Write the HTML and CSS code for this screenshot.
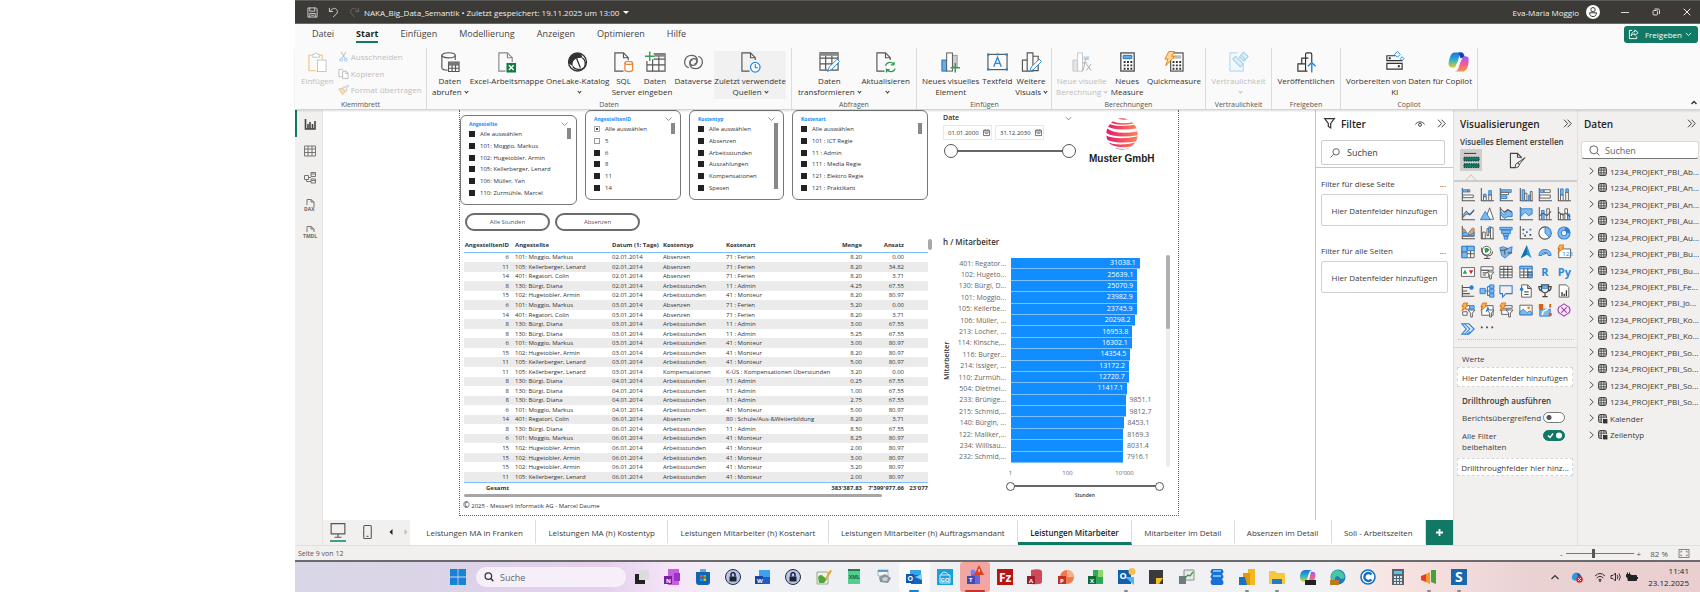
FILE: index.html
```html
<!DOCTYPE html>
<html lang="de">
<head>
<meta charset="utf-8">
<title>NAKA_Big_Data_Semantik</title>
<link rel="stylesheet" href="styles.css">
</head>
<body>
<div class="app">
  <header class="titlebar">
    <button class="tb-icon" aria-label="Speichern"><svg viewBox="0 0 12 12"><path d="M1 1h9l1 1v9H1zM3 1v3.500h5.500V1M3 11V7h6v4M4.500 9h3" fill="none" stroke="#d8d8d8"/></svg></button>
    <button class="tb-icon" aria-label="Rückgängig"><svg viewBox="0 0 12 12"><path d="M1.500 1v4h4M2 5l2.500-2.700C8-.5 12.500 4.500 9 7.800L5.500 11" fill="none" stroke="#d8d8d8"/></svg></button>
    <button class="tb-icon" aria-label="Wiederholen"><svg viewBox="0 0 12 12"><path d="M10.500 1v4h-4M10 5L7.500 2.300C4-.5-.5 4.500 3 7.800L6.500 11" fill="none" stroke="#6c6b69"/></svg></button>
    <span class="doc-title">NAKA_Big_Data_Semantik • Zuletzt gespeichert: 19.11.2025 um 13:00</span>
    <svg class="caret" viewBox="0 0 6 3"><path d="M0 0h6L3 3z" fill="#fff"/></svg>
    <span class="user">Eva-Maria Moggio</span>
    <svg class="avatar" viewBox="0 0 14 14"><circle cx="7" cy="7" r="7" fill="#fff"/><circle cx="7" cy="4.700" r="2.200" fill="none" stroke="#3b3a37"/><path d="M3.500 7.800h7c0 5-7 5-7 0z" fill="none" stroke="#3b3a37"/></svg>
    <button class="win" aria-label="Minimieren"><svg viewBox="0 0 8 8"><path d="M0 4.500h8" stroke="#ddd"/></svg></button>
    <button class="win" aria-label="Wiederherstellen"><svg viewBox="0 0 8 8"><rect x="1" y="2.500" width="4.500" height="4.500" rx="1" fill="none" stroke="#ddd"/><path d="M2.500 1h3.500q1.500 0 1.500 1.500V6" fill="none" stroke="#ddd"/></svg></button>
    <button class="win" aria-label="Schliessen"><svg viewBox="0 0 8 8"><path d="M.7.700l6.600 6.600M7.300.700L.7 7.300" stroke="#eee"/></svg></button>
  </header>

  <nav class="menubar">
    <a href="#">Datei</a><a href="#" class="on">Start</a><a href="#">Einfügen</a><a href="#">Modellierung</a><a href="#">Anzeigen</a><a href="#">Optimieren</a><a href="#">Hilfe</a>
    <button class="share"><svg viewBox="0 0 12 12"><path d="M4.500 1.500H1.500v9h8V8" fill="none" stroke="#fff"/><path d="M7.500 1l3.500 3-3.500 3V5.300C5.500 5.300 4.300 6 3.500 7.500 3.600 5 5 2.900 7.500 2.700z" fill="none" stroke="#fff" stroke-linejoin="round"/></svg><span>Freigeben</span><svg class="sm" viewBox="0 0 8 5"><path d="M1 .700l3 3 3-3" fill="none" stroke="#fff"/></svg></button>
  </nav>

  <div class="ribbon">
    <section class="group g-clip off">
      <div class="items">
        <button class="cmd"><svg viewBox="0 0 22 22"><path d="M5 4H2v16h8M13 4h3v4" fill="none" stroke="#f3cfa0" stroke-width="1.500"/><path d="M6 6V3h2c0-2 3-2 3 0h2v3z" fill="#fff" stroke="#c4c4c4"/><rect x="11" y="9" width="9" height="12" fill="#fff" stroke="#c4c4c4"/></svg><span>Einfügen</span></button>
        <div class="stack">
          <button><svg viewBox="0 0 12 12"><path d="M3.500 1l4 7M8.500 1l-4 7" stroke="#b5b5b5" fill="none"/><circle cx="3.500" cy="9.500" r="1.500" fill="none" stroke="#8fc1e8"/><circle cx="8.500" cy="9.500" r="1.500" fill="none" stroke="#8fc1e8"/></svg>Ausschneiden</button>
          <button><svg viewBox="0 0 12 12"><path d="M5 9.500H1v-8h4l1 1M5 3.500h4l2 2v6H5zM8.500 3.500V6H11" fill="none" stroke="#bcbcbc"/></svg>Kopieren</button>
          <button><svg viewBox="0 0 12 12"><path d="M1 5.500l4-1 3.500 3.500L5 11.500z" fill="#f7dcb8" stroke="#eebf88"/><path d="M5 4.500L6.500 3 8 4l2.500-3 1 1L9 5l.7 1.500-1.200 1.500z" fill="#fff" stroke="#bcbcbc"/></svg>Format übertragen</button>
        </div>
      </div>
      <h2>Klemmbrett</h2>
    </section>
    <section class="group g-data">
      <div class="items">
        <button class="cmd"><svg viewBox="0 0 22 22"><path d="M3 4v13c0 1.500 3 2.500 6 2.500M17 4v5" class="k"/><ellipse cx="10" cy="4" rx="7" ry="2.700" class="k"/><path d="M10 11h11v10H10zM10 14h11M10 17.500h11M13.700 14v7M17.300 14v7" class="k"/><path d="M10 11h11v3H10z" fill="#777"/></svg><span>Daten<br>abrufen<i class="v"></i></span></button>
        <button class="cmd"><svg viewBox="0 0 22 22"><path d="M10 20.500H3v-19h9l5 5V11M12 1.500v5h5" fill="none" stroke="#888" stroke-width="1.200"/><rect x="11" y="12" width="10" height="10" fill="#107c41"/><path d="M13.500 14.500l5 5M18.500 14.500l-5 5" stroke="#fff" stroke-width="1.500"/></svg><span>Excel-Arbeitsmappe</span></button>
        <button class="cmd"><svg viewBox="0 0 22 22"><circle cx="11" cy="11" r="9.400" fill="#fff" stroke="#333" stroke-width="1.400"/><path d="M11 1.600C4 1.600 1 7 2 12.500l4 3C5 9 9 6 16 6.500c0-3-2-4.900-5-4.900z" fill="#333"/><path d="M6 15.500c2 3.500 8 4.500 12 1.500M16 6.500c3 2 4 6 2 10.500M10 7l4 10" fill="none" stroke="#333" stroke-width="1.400"/></svg><span>OneLake-Katalog<br><i class="v"></i></span></button>
        <button class="cmd"><svg viewBox="0 0 22 22"><path d="M11 20.500H2v-19h9l5 5V9M11 1.500v5h5" class="k"/><path d="M12.500 12v7.500c0 2 8 2 8 0V12" fill="#fff" stroke="#e8833a" stroke-width="1.300"/><ellipse cx="16.500" cy="12" rx="4" ry="1.600" fill="#fff" stroke="#e8833a" stroke-width="1.300"/></svg><span>SQL<br>Server</span></button>
        <button class="cmd"><svg viewBox="0 0 22 22"><path d="M9 2.500h12v18H2V10M9 8h12M2 14h19M8 8v12.500M14.500 4v16.500" class="k"/><path d="M10 2.500h11v3H10z" fill="#888"/><path d="M5 0v10M0 5h10" stroke="#2f9e50" stroke-width="1.400"/></svg><span>Daten<br>eingeben</span></button>
        <button class="cmd"><svg viewBox="0 0 22 22"><path d="M6 17C-1 15 1 4 9 4c7 0 8 9 2 10.500-4 .5-5-5-1-5.800M16 5c7 2 5 13-3 13-7 0-8-9-2-10.500 4-.5 5 5 1 5.800" fill="none" stroke="#666" stroke-width="1.400"/></svg><span>Dataverse</span></button>
        <button class="cmd hot"><svg viewBox="0 0 22 22"><path d="M10 20.500H2v-19h9l5 5V9M11 1.500v5h5" class="k"/><circle cx="16" cy="16.500" r="5" fill="#fff" stroke="#2b88d8" stroke-width="1.300"/><path d="M16 13v4h3" fill="none" stroke="#2b88d8" stroke-width="1.200"/></svg><span>Zuletzt verwendete<br>Quellen<i class="v"></i></span></button>
      </div>
      <h2>Daten</h2>
    </section>
    <section class="group g-query">
      <div class="items">
        <button class="cmd"><svg viewBox="0 0 22 22"><path d="M1 1.500h19v18H1zM1 7h19M1 13h19M7 4v15.500M13.500 4v15.500" class="k"/><path d="M1 1.500h19v3H1z" fill="#888"/><path d="M9 21l2-5 8-8 2.500 2.500-8 8z" fill="#fff" stroke="#2b88d8"/></svg><span>Daten<br>transformieren<i class="v"></i></span></button>
        <button class="cmd"><svg viewBox="0 0 22 22"><path d="M10 20.500H2v-19h9l5 5V9M11 1.500v5h5" class="k"/><path d="M11 15c1-4 7-5 9-1V11M21 18c-1 4-7 4-9 1v3M20 14h-3.500M12 19h3.500" fill="none" stroke="#2f9e50" stroke-width="1.300"/></svg><span>Aktualisieren<br><i class="v"></i></span></button>
      </div>
      <h2>Abfragen</h2>
    </section>
    <section class="group g-insert">
      <div class="items">
        <button class="cmd"><svg viewBox="0 0 22 22"><rect x="2" y="9" width="5" height="11.500" fill="#63aee8" stroke="#1a6fb8"/><rect x="13" y="4" width="5" height="12" fill="#ccc" stroke="#999"/><rect x="7" y="1.500" width="6" height="19" fill="#fff" stroke="#555"/><path d="M16 12v10M11 17h10" stroke="#2f9e50" stroke-width="1.500"/></svg><span>Neues visuelles<br>Element</span></button>
        <button class="cmd"><svg viewBox="0 0 22 22"><rect x="1" y="3" width="20" height="16" class="k"/><path d="M0 2h2.500v2.500H0zM19.500 2H22v2.500h-2.500zM0 17.500h2.500V20H0zM19.500 17.500H22V20h-2.500zM10 2h2.500v2H10z" fill="#2b88d8"/><path d="M7 16l4-10 4 10M8.500 12.500h5" fill="none" stroke="#2b88d8" stroke-width="1.400"/></svg><span>Textfeld</span></button>
        <button class="cmd"><svg viewBox="0 0 22 22"><path d="M1.500 9h5v11.500h-5zM6.500 1.500h6v19h-6zM12.500 5H18v15h-5.500z" class="k"/><path d="M9 21l2-5 8-8 2.500 2.500-8 8z" fill="#fff" stroke="#2b88d8"/></svg><span>Weitere<br>Visuals<i class="v"></i></span></button>
      </div>
      <h2>Einfügen</h2>
    </section>
    <section class="group g-calc">
      <div class="items">
        <button class="cmd off"><svg viewBox="0 0 22 22"><rect x="2" y="9" width="5" height="11.500" fill="#e4e4e4" stroke="#c8c8c8"/><rect x="7" y="1.500" width="5" height="19" fill="#fff" stroke="#c8c8c8"/><path d="M13 5h6v4h-6z" fill="#bcdcf5"/><path d="M18 7c-3-1-3 3-4 7s-1 7-3 6M12 12h5M16 13l5 7M21 13l-5 7" fill="none" stroke="#aaa"/></svg><span>Neue visuelle<br>Berechnung<i class="v"></i></span></button>
        <button class="cmd"><svg viewBox="0 0 22 22"><rect x="4" y="1.500" width="14" height="19" fill="#fff" stroke="#444" stroke-width="1.300"/><path d="M6.500 4h9v3.500h-9z" fill="#63aee8" stroke="#1a6fb8"/><path d="M7 11h9M7 14.500h9M7 18h9" stroke="#333" stroke-width="2" stroke-dasharray="2 1.500"/></svg><span>Neues<br>Measure</span></button>
        <button class="cmd"><svg viewBox="0 0 22 22"><rect x="8" y="1.500" width="13" height="19" fill="#fff" stroke="#555" stroke-width="1.300"/><path d="M10 4h9v3.500h-9z" fill="#bbb"/><path d="M10 11h9M10 14.500h9M10 18h9" stroke="#333" stroke-width="2" stroke-dasharray="2 1.500"/><path d="M6 0h6L9 5h3L3 15l2-7H2z" fill="#fdd49a" stroke="#e8820c"/></svg><span>Quickmeasure</span></button>
      </div>
      <h2>Berechnungen</h2>
    </section>
    <section class="group g-sens">
      <div class="items">
        <button class="cmd off"><svg viewBox="0 0 22 22"><path d="M10 1.500H2v19h14V12" fill="#f2f9fd" stroke="#a9d3ec"/><path d="M5 8l8 8 3-3-8-8zM12 6l4-5 5 4-4 5zM14 4l4 4" fill="#dff0fa" stroke="#a9d3ec" stroke-width="1.300"/></svg><span>Vertraulichkeit<br><i class="v"></i></span></button>
      </div>
      <h2>Vertraulichkeit</h2>
    </section>
    <section class="group g-pub">
      <div class="items">
        <button class="cmd"><svg viewBox="0 0 22 22"><path d="M12 20.500H2V13h8M6 13V7h7M10 7V3q0-1.500 1.500-1.500H15q1.500 0 1.500 1.500v8M10 7v13.500" fill="none" stroke="#333" stroke-width="1.200"/><path d="M16.500 22V12M12.500 15.500l4-4 4 4" fill="none" stroke="#2b88d8" stroke-width="1.500"/></svg><span>Veröffentlichen</span></button>
      </div>
      <h2>Freigeben</h2>
    </section>
    <section class="group g-cop">
      <div class="items">
        <button class="cmd"><svg viewBox="0 0 22 22"><path d="M12 4.500H3v5h16V8M3 12.500h16v6H3z" fill="none" stroke="#333" stroke-width="1.200"/><path d="M5 6h2v2H5zM14.500 14.500h2v2h-2z" fill="#222"/><path d="M14 0l3 3-3 3-3-3zM19 5.500l2 2-2 2-2-2z" fill="#fff" stroke="#2b88d8"/></svg><span>Vorbereiten von Daten für<br>KI</span></button>
        <button class="cmd"><svg viewBox="0 0 22 22"><defs><linearGradient id="ca" x1="0" y1="0" x2="0" y2="1"><stop offset="0" stop-color="#1f6fe0"/><stop offset=".5" stop-color="#28b4c8"/><stop offset="1" stop-color="#f4c430"/></linearGradient><linearGradient id="cb" x1="0" y1="0" x2="0" y2="1"><stop offset="0" stop-color="#a05cf0"/><stop offset=".5" stop-color="#ee5c9c"/><stop offset="1" stop-color="#f8943c"/></linearGradient></defs><path d="M7 1h9c-3 0-4 3-5 7l-2 6c-1 2-2 3-4 3-4 0-5-3-4-7S3 1 7 1z" fill="url(#ca)"/><path d="M11 1h3c3 0 3 4 4 6h-5z" fill="#1b3fb4"/><path d="M15 21H7c3 0 4-3 5-7l2-6c1-2 2-3 4-3 4 0 4 3 3.500 7S19 21 15 21z" fill="url(#cb)"/><path d="M12 7h3l-4 8H8z" fill="#fafafa"/></svg><span>Copilot</span></button>
      </div>
      <h2>Copilot</h2>
    </section>
    <button class="collapse" aria-label="Menüband reduzieren"><svg viewBox="0 0 8 5"><path d="M1.500 4L4 1.500 6.500 4" fill="none" stroke="#333" stroke-width="1.400"/></svg></button>
  </div>

  <div class="work">
    <nav class="rail">
      <button class="on" aria-label="Berichtansicht"><svg viewBox="0 0 12 12"><path d="M1.500 1v10h9.500V3M4 11V6M6 11V4M8.500 11V6" fill="none" stroke="#444" stroke-width="1.600"/></svg></button>
      <button aria-label="Tabellenansicht"><svg viewBox="0 0 12 12"><path d="M.5 1h11v10H.5zM.5 4h11M.5 7.500h11M4 1v10M8 1v10" fill="none" stroke="#777"/></svg></button>
      <button aria-label="Modellansicht"><svg viewBox="0 0 12 12"><path d="M.5 3.500h4v4h-4zM7 .5h4.500v4H7zM7 7h4.500v4H7zM4.500 5.500H7M2.500 7.500v2H7M7 2h4.500M7 8.500h4.500" fill="none" stroke="#777"/></svg></button>
      <button aria-label="DAX-Abfrageansicht"><svg viewBox="0 0 12 12"><path d="M3 6V.5h4L10 3v5M7 .5V3h3" fill="none" stroke="#777"/><text x="0" y="11.500">DAX</text></svg></button>
      <button aria-label="TMDL-Ansicht"><svg viewBox="0 0 12 12"><path d="M3 6V.5h4L10 3v3M7 .5V3h3" fill="none" stroke="#777"/><text x="-1" y="11.500">TMDL</text></svg></button>
    </nav>

    <div class="center">
      <div class="top">
        <main class="stage">
          <div class="page">
            <div class="col-left">
              <div class="slicers" id="slicers"></div>
              <div class="pills"><button>Alle Stunden</button><button>Absenzen</button></div>
              <div class="gridwrap">
                <table class="grid">
                  <colgroup><col class="c1"><col class="c2"><col class="c3"><col class="c4"><col class="c5"><col class="c6"><col class="c7"><col class="c8"></colgroup>
                  <thead><tr><th class="n">AngestelltenID</th><th>Angestellte</th><th>Datum (1: Tage)</th><th>Kostentyp</th><th>Kostenart</th><th class="n">Menge</th><th class="n">Ansatz</th><th></th></tr></thead>
                  <tbody id="rows"></tbody>
                  <tfoot><tr><td class="n">Gesamt</td><td></td><td></td><td></td><td></td><td class="n">383'387.83</td><td class="n">7'399'977.66</td><td class="n">23'077</td></tr></tfoot>
                </table>
                <div class="vthumb"></div>
              </div>
              <div class="hthumb"></div>
              <p class="copy"><b>©</b> 2025 - Messerli Informatik AG - Marcel Daume</p>
            </div>
            <div class="col-right">
              <div class="head">
                <div class="datebox">
                  <div class="datehead"><label for="from">Date</label><svg viewBox="0 0 8 5"><path d="M1 1l3 3 3-3" fill="none" stroke="#777"/></svg></div>
                  <div class="dates">
                    <div class="date"><input id="from" value="01.01.2000"><svg viewBox="0 0 8 8"><path d="M.5 1.500h7v6h-7zM.5 3.500h7M2.500 0v2M5.500 0v2M2.500 5h3" fill="none" stroke="#666"/></svg></div>
                    <div class="date"><input aria-label="Bis" value="31.12.2030"><svg viewBox="0 0 8 8"><path d="M.5 1.500h7v6h-7zM.5 3.500h7M2.500 0v2M5.500 0v2M2.500 5h3" fill="none" stroke="#666"/></svg></div>
                  </div>
                  <div class="dual big"><input type="range" value="0" aria-label="Datum von"><input type="range" value="100" aria-label="Datum bis"></div>
                </div>
                <div class="logo">
                  <svg viewBox="0 0 32 32"><defs><linearGradient id="lg"><stop offset="0" stop-color="#e5136f"/><stop offset="1" stop-color="#fb8a52"/></linearGradient><clipPath id="lc"><circle cx="16" cy="16" r="15.700"/></clipPath></defs><g clip-path="url(#lc)"><path d="M-1 3q8 8 34 3v4q-26 4-34-3zM-1 9q10 9 34 4v4q-25 4-34-3zM-1 17q12 6 34 1v5q-22 4-34-2zM1 24q12 5 30 0v3q-16 5-27-1zM9 30q8 2 14 0v3H9zM6 3q8 4 22 1v1.500q-14 3-24-1zM10 0q6 3 14 1V-1H10z" fill="url(#lg)"/></g></svg>
                  <strong>Muster GmbH</strong>
                </div>
              </div>
              <h3 class="ctitle">h / Mitarbeiter</h3>
              <div class="chart">
                <div class="ylab">Mitarbeiter</div>
                <div class="plot" id="plot"></div>
                <div class="vscroll"><div></div></div>
              </div>
              <div class="xaxis"><span>1</span><span>100</span><span>10'000</span></div>
              <div class="dual small"><input type="range" value="0" aria-label="Stunden von"><input type="range" value="100" aria-label="Stunden bis"></div>
              <div class="xlab">Stunden</div>
            </div>
          </div>
        </main>
        <aside class="filter">
          <div class="phead"><svg class="fun" viewBox="0 0 11 11"><path d="M.7.700h9.600L6.700 5.500V10L4.300 8.500v-3z" fill="none" stroke="#333" stroke-width="1.200"/></svg><h2>Filter</h2><svg class="eye" viewBox="0 0 10 8"><path d="M.5 4.500C2 1 8 1 9.500 4.500" fill="none" stroke="#444"/><circle cx="5" cy="4.800" r="1.500" fill="none" stroke="#444"/></svg><svg class="dbl" viewBox="0 0 9 9"><path d="M1 .700L4.600 4.500 1 8.300M4.600.700L8.200 4.500 4.600 8.300" fill="none" stroke="#444"/></svg></div>
          <div class="fsearch"><svg viewBox="0 0 11 11"><circle cx="6.700" cy="4.200" r="3.500" fill="none" stroke="#555"/><path d="M4 7L.7 10.300" stroke="#555"/></svg><input aria-label="Filter suchen" value="Suchen"></div>
          <div class="fsec"><div class="frow"><span>Filter für diese Seite</span><b>...</b></div><div class="drop">Hier Datenfelder hinzufügen</div></div>
          <div class="fsec"><div class="frow"><span>Filter für alle Seiten</span><b>...</b></div><div class="drop">Hier Datenfelder hinzufügen</div></div>
        </aside>
      </div>
      <nav class="sheets">
        <div class="views">
          <svg viewBox="0 0 14 15" class="mon"><path d="M1 1h12v9H1zM4 13h6M7 10v3" fill="none" stroke="#555"/></svg>
          <svg viewBox="0 0 8 13" class="pho"><rect x=".5" y=".5" width="7" height="12" rx="1" fill="none" stroke="#555"/><path d="M3 10.500h2" stroke="#555"/></svg>
          <svg viewBox="0 0 4 6" class="ar"><path d="M3.500 0v6L.5 3z" fill="#222"/></svg>
          <svg viewBox="0 0 4 6" class="ar"><path d="M.5 0v6l3-3z" fill="#c0c0c0"/></svg>
        </div>
        <a href="#">Leistungen MA in Franken</a><a href="#">Leistungen MA (h) Kostentyp</a><a href="#">Leistungen Mitarbeiter (h) Kostenart</a><a href="#">Leistungen Mitarbeiter (h) Auftragsmandant</a><a href="#" class="on">Leistungen Mitarbeiter</a><a href="#">Mitarbeiter im Detail</a><a href="#">Absenzen im Detail</a><a href="#">Soll - Arbeitszeiten</a>
        <button aria-label="Neue Seite"><svg viewBox="0 0 9 9"><path d="M4.500 1v7M1 4.500h7" stroke="#fff" stroke-width="1.800"/></svg></button>
      </nav>
    </div>

    <aside class="vis">
      <div class="phead"><h2>Visualisierungen</h2><svg class="dbl" viewBox="0 0 9 9"><path d="M1 .700L4.600 4.500 1 8.300M4.600.700L8.200 4.500 4.600 8.300" fill="none" stroke="#444"/></svg></div>
      <h3>Visuelles Element erstellen</h3>
      <div class="vtabs">
        <button class="on" aria-label="Visual erstellen"><svg viewBox="0 0 18 18"><path d="M1 1.500h13" stroke="#333"/><path d="M1 5.500h16v4H1zM1 12.500h16v4H1z" fill="#117865" stroke="#222" stroke-dasharray="1.500 1"/></svg></button>
        <button aria-label="Formatieren"><svg viewBox="0 0 18 18"><path d="M7 16.500H1.500V1.500H9L13 5.500v1M9 1.500v4h4" fill="none" stroke="#444" stroke-width="1.200"/><path d="M17 6l-6 7-2-1.500zM9 11.500q-2.500.500-2.500 5 4 .500 4.500-3.500z" fill="#f2f0ee" stroke="#444"/></svg></button>
      </div>
      <div class="vline"><svg viewBox="0 0 12 7"><path d="M0 6.500h1L6 1l5 5.500h1" fill="#f2f0ee" stroke="#cfcdca" stroke-width="1.200"/></svg></div>
      <div class="vgrid" id="vgrid"></div>
      <div class="wells">
        <h4>Werte</h4>
        <div class="well">Hier Datenfelder hinzufügen</div>
        <h4 class="strong">Drillthrough ausführen</h4>
        <div class="opt"><label for="o1">Berichtsübergreifend</label><input type="checkbox" id="o1" class="toggle"></div>
        <div class="opt two"><label for="o2">Alle Filter<br>beibehalten</label><input type="checkbox" id="o2" class="toggle" checked></div>
        <div class="well short">Drillthroughfelder hier hinz...</div>
      </div>
    </aside>

    <aside class="data">
      <div class="phead"><h2>Daten</h2><svg class="dbl" viewBox="0 0 9 9"><path d="M1 .700L4.600 4.500 1 8.300M4.600.700L8.200 4.500 4.600 8.300" fill="none" stroke="#444"/></svg></div>
      <div class="dsearch"><svg viewBox="0 0 11 11"><circle cx="4.800" cy="4.800" r="4" fill="none" stroke="#666"/><path d="M7.800 7.800l2.700 2.700" stroke="#666"/></svg><input placeholder="Suchen" aria-label="Daten suchen"></div>
      <ul class="tree" id="tree"></ul>
    </aside>
  </div>

  <footer class="status">
    <span class="pg">Seite 9 von 12</span>
    <span>-</span><input type="range" class="zoom" value="40" aria-label="Zoom"><span>+</span>
    <span class="pct">82 %</span>
    <svg class="fit" viewBox="0 0 12 10"><rect x=".5" y=".5" width="11" height="9" fill="none" stroke="#777"/><path d="M2.500 4V2.500H4M8 2.500h1.500V4M9.500 6v1.500H8M4 7.500H2.500V6" fill="none" stroke="#777"/></svg>
  </footer>

  <div class="taskbar">
    <button class="start" aria-label="Start"><svg viewBox="0 0 16 16"><path d="M0 0h7.600v7.600H0zM8.400 0H16v7.600H8.400zM0 8.400h7.600V16H0zM8.400 8.400H16V16H8.400z" fill="#1683d8"/></svg></button>
    <div class="search"><svg viewBox="0 0 11 11"><circle cx="4.800" cy="4.500" r="3.600" fill="none" stroke="#333" stroke-width="1.400"/><path d="M7.300 7l3 3.300" stroke="#333" stroke-width="1.600"/></svg><input placeholder="Suche" aria-label="Suche"></div>
    <div class="apps" id="apps"></div>
    <div class="tray">
      <svg viewBox="0 0 12 12"><path d="M2.500 8L6 4.500 9.500 8" fill="none" stroke="#333" stroke-width="1.200"/></svg>
      <svg viewBox="0 0 12 12"><path d="M1 8C0 4 4 0 7 2l3 4-6 4z" fill="#2b9be0"/><path d="M6 2c3 0 4 2 5 5H7z" fill="#1c58b8"/><circle cx="8.500" cy="8.500" r="3.300" fill="#d52b32"/><path d="M7.300 7.300l2.400 2.400M9.700 7.300L7.300 9.700" stroke="#fff"/></svg>
      <svg class="gap" viewBox="0 0 12 12"><path d="M1 5q5-5 10 0M2.700 7q3.300-3.300 6.600 0M4.400 8.800q1.600-1.600 3.200 0" fill="none" stroke="#333"/><circle cx="6" cy="10" r="1" fill="#333"/></svg>
      <svg viewBox="0 0 12 12"><path d="M1 4.500h2L5.500 2v8L3 7.500H1zM7.200 4q1.500 2 0 4M9 2.500q2.600 3.500 0 7" fill="none" stroke="#333"/></svg>
      <svg viewBox="0 0 12 12"><path d="M2 4.500h8.500v5H2z" fill="#222" stroke="#222"/><path d="M11.500 6v2" stroke="#222"/><path d="M.5 3.500h4V6L2.500 7.500.5 6zM1.500 1.500v2M3.500 1.500v2" fill="#222" stroke="#222"/></svg>
      <div class="clock">11:41<br>23.12.2025</div>
    </div>
  </div>
</div>
<script src="script.js"></script>
</body>
</html>
```
FILE: styles.css
```css
* { box-sizing: border-box; }
html, body { height: 100%; }
body { margin: 0; background: #fff; font: 8px/11px "Open Sans", "Noto Sans", sans-serif; color: #3b3a39; }
button { border: 0; padding: 0; background: none; font: inherit; color: inherit; }
a { color: inherit; text-decoration: none; }
h2, h3, h4, p, ul { margin: 0; padding: 0; font-size: inherit; font-weight: 400; }
input { font: inherit; color: inherit; border: 0; padding: 0; margin: 0; background: none; min-width: 0; }
svg { display: block; flex: none; overflow: visible; }
.k { fill: none; stroke: #555; stroke-width: 1.2; }

.app { min-height: 100%; padding-left: 295px; display: flex; flex-direction: column; }

.titlebar { height: 24px; flex: none; display: flex; align-items: center; padding: 0 9px 0 12px; background: #3b3a37; border-top: 1px solid #5a5a58; border-bottom: 1px solid #6a6a68; color: #f0f0f0; }
.tb-icon { margin-right: 10px; }
.tb-icon svg { width: 11px; height: 11px; }
.tb-icon:nth-child(3) { margin-right: 4px; }
.caret { width: 6px; height: 3px; margin-left: 4px; }
.user { margin-left: auto; }
.avatar { width: 14px; height: 14px; margin: 0 21px 0 7px; }
.win { margin-left: 23px; }
.avatar + .win { margin-left: 0; }
.win svg { width: 8px; height: 8px; }

.menubar { display: flex; align-items: center; height: 23px; flex: none; padding: 0 2px 0 17px; gap: 22px; background: #fafafa; font-size: 9px; color: #444; }
.menubar a { padding: 2px 0; margin-bottom: 2px; border-bottom: 2px solid transparent; }
.menubar a.on { font-weight: 700; color: #222; border-color: #117865; }
.share { margin: 0 0 2px auto; height: 17px; display: flex; align-items: center; gap: 6px; padding: 0 6px 0 4px; border-radius: 3px; background: #117865; color: #fff; font-size: 8px; }
.share svg { width: 11px; height: 11px; }
.share .sm { width: 7px; height: 5px; margin-left: -3px; }

.ribbon { display: flex; flex: none; height: 63px; padding-top: 1px; background: #fafafa; border-bottom: 1px solid #d4d4d4; position: relative; z-index: 2; box-shadow: 0 1px 2px #0002; }
.group { display: flex; flex-direction: column; border-right: 1px solid #dcdcdc; padding: 3px 6px 0; color: #333; }
.group h2 { text-align: center; font-size: 7px; line-height: 8px; margin-top: auto; color: #555; white-space: nowrap; }
.items { display: flex; justify-content: space-between; }
.cmd { display: flex; flex-direction: column; align-items: center; gap: 2px; height: 48px; white-space: nowrap; text-align: center; line-height: 11px; }
.cmd svg { width: 21px; height: 22px; }
.cmd.hot { background: #f1f1f1; }
.off { color: #bdbdbd; }
.v { display: inline-block; width: 3px; height: 3px; margin: 0 0 2px 3px; border: solid currentColor; border-width: 0 1px 1px 0; transform: rotate(45deg); }
.stack { display: flex; flex-direction: column; justify-content: space-between; height: 44px; }
.stack button { display: flex; align-items: center; gap: 2px; white-space: nowrap; }
.stack svg { width: 11px; height: 11px; }
.group.off { color: #bdbdbd; }
.g-clip { width: 132px; }
.g-clip .items { justify-content: flex-start; gap: 4px; }
.g-data { width: 365px; padding: 3px 5px 0; }
.g-query { width: 125px; }
.g-insert { width: 135px; padding: 3px 4px 0 5px; }
.g-calc { width: 154px; padding: 3px 4px 0; }
.g-sens { width: 66px; }
.g-pub { width: 69px; }
.g-cop { width: 137px; padding: 3px 5px 0; }
.g-sens .items, .g-pub .items { justify-content: center; }
.cmd.off { color: #bdbdbd; }
.collapse { margin: auto 2px 4px auto; }
.collapse svg { width: 8px; height: 5px; }

.work { flex: 1; display: flex; min-height: 0; }
.rail { width: 28px; flex: none; display: flex; flex-direction: column; background: #f2f0ee; border-right: 1px solid #e6e4e2; }
.rail button { height: 27px; display: flex; align-items: center; justify-content: center; border-left: 2px solid transparent; }
.rail button.on { border-color: #117865; }
.rail svg { width: 12px; height: 12px; }
.rail text { font: 700 5px "Open Sans", sans-serif; fill: #666; }

.center { flex: 1; min-width: 0; display: flex; flex-direction: column; }
.top { flex: 1; display: flex; min-height: 0; }
.stage { flex: 1; display: flex; justify-content: center; align-items: flex-start; }
.page { display: flex; gap: 11px; width: 720px; padding-bottom: 5px; border: 1px dotted #666; border-top: 0; font-size: 6px; line-height: 8px; color: #333; }
.col-left { width: 472px; flex: none; }
.slicers { display: flex; gap: 8px; height: 95px; }
.slicer { width: 95px; height: 90px; border: 1px solid #777; border-radius: 6px; padding: 4px 5px 5px 8px; display: grid; grid-template-rows: 8px 1fr; }
.slicer.w1 { width: 117px; align-self: flex-end; }
.slicer.w2 { width: 96px; }
.slicer.w4 { width: 136px; }
.slicer h4 { font-size: 5px; font-weight: 700; color: #118dff; display: flex; justify-content: space-between; align-items: center; }
.slicer h4 svg { width: 7px; height: 4px; margin-right: 3px; }
.slicer .body { display: flex; justify-content: space-between; }
.slicer ul { list-style: none; display: grid; grid-template-rows: repeat(6, 1fr); flex: 1; }
.slicer label { display: flex; align-items: center; gap: 5px; height: 100%; }
.slicer input { appearance: none; width: 6px; height: 6px; border: 1px solid #999; background: #fff; }
.slicer input:checked { background: #222; border-color: #222; }
.slicer input.part { background: #444; border: 1px solid #aaa; box-shadow: inset 0 0 0 1px #fff; }
.slicer .th { width: 4px; height: 11px; background: #8a8886; }
.slicer .th.full { height: 66px; }
.pills { display: flex; gap: 5px; padding: 8px 0 0 5px; }
.pills button { width: 85px; height: 18px; border: 2px solid #6b6b6b; border-radius: 9px; color: #555; line-height: 8px; }
.gridwrap { display: flex; margin: 7px 0 0 4px; align-items: flex-start; }
.grid { table-layout: fixed; width: 465px; height: 255px; border-collapse: collapse; color: #333; }
.grid th, .grid td { padding: 0; text-align: left; white-space: nowrap; line-height: 8px; }
.grid .n { text-align: right; }
.grid thead th { height: 14px; font-weight: 700; border-bottom: 1px solid #7cc0f7; color: #333; }
.grid tbody tr:nth-child(even) { background: #ebebeb; }
.grid tfoot td { height: 11px; font-weight: 700; border-top: 1px solid #7cc0f7; color: #333; }
.c1 { width: 45px; }
.c2 { width: 103px; }
.c3 { width: 51px; }
.c4 { width: 63px; }
.c5 { width: 92px; }
.c6 { width: 44px; }
.c7 { width: 42px; }
.grid td:nth-child(2), .grid th:nth-child(2) { padding-left: 6px; }
.vthumb { width: 4px; height: 11px; margin-top: 1px; border-radius: 2px; background: #a8a8a8; }
.hthumb { width: 418px; height: 3px; margin: 1px 0 0 4px; border-radius: 2px; background: #a6a6a6; }
.copy { margin: 4px 0 0 3px; }
.copy b { font-size: 8px; font-weight: 600; }

.col-right { flex: 1; display: flex; flex-direction: column; }
.head { display: flex; gap: 12px; padding-top: 4px; height: 112px; align-items: flex-start; margin-bottom: 14px; }
.datebox { width: 134px; }
.datehead { display: flex; justify-content: space-between; align-items: center; font-size: 7px; font-weight: 600; padding-right: 5px; }
.datehead svg { width: 7px; height: 5px; }
.dates { display: flex; gap: 3px; margin-top: 3px; }
.date { width: 49px; height: 15px; border: 1px solid #e8e8e8; display: flex; align-items: center; padding: 0 1px 0 4px; }
.date input { width: 35px; }
.date svg { width: 7px; height: 7px; }
.dual { display: grid; align-items: center; }
.dual::before { content: ""; grid-area: 1/1; height: 2px; background: #666; margin: 0 5px; }
.dual input { grid-area: 1/1; appearance: none; width: 100%; height: 100%; pointer-events: none; z-index: 1; }
.dual input::-webkit-slider-thumb { appearance: none; pointer-events: auto; width: 14px; height: 14px; border: 1px solid #555; border-radius: 50%; background: #fff; }
.dual.big { height: 16px; margin: 3px 1px 0 1px; }
.dual.small { height: 10px; margin: 4px 17px 0 63px; }
.dual.small input::-webkit-slider-thumb { width: 9px; height: 9px; }
.logo { flex: 1; display: flex; flex-direction: column; align-items: center; padding: 4px 26px 0 0; }
.logo svg { width: 32px; height: 32px; }
.logo strong { font: 700 10px/12px "Liberation Sans", Arial, sans-serif; margin-top: 3px; color: #222; white-space: nowrap; }
.ctitle { font-size: 8px; line-height: 10px; font-weight: 600; color: #333; padding-top: 1px; }
.chart { display: flex; height: 212px; margin-top: 8px; }
.ylab { width: 12px; writing-mode: vertical-rl; transform: rotate(180deg); text-align: center; font-size: 7px; font-weight: 600; }
.plot { flex: 1; display: grid; grid-template-rows: repeat(18, 1fr); padding: 3px 0 4px; font-size: 7px; }
.bar { display: grid; grid-template-columns: 50px 1fr; align-items: center; gap: 5px; margin-left: 1px; color: #666; }
.bar .name { text-align: right; white-space: nowrap; }
.bar .area { display: flex; align-items: center; height: 100%; }
.bar .fill { height: 100%; background: #118dff; border-bottom: 1px solid #7cc0ff; color: #fff; display: flex; align-items: center; justify-content: flex-end; padding-right: 4px; flex: none; }
.bar .out { margin-left: 4px; }
.vscroll { width: 4px; margin: 0 11px 0 6px; background: #ececec; border-radius: 2px; }
.vscroll div { height: 74px; background: #b0b0b0; border-radius: 2px; }
.xaxis { display: grid; grid-template-columns: 57px 57px 57px; margin: 2px 0 0 39px; text-align: center; color: #666; line-height: 8px; }
.xlab { margin: 0 17px 0 63px; text-align: center; font-size: 5px; font-weight: 600; line-height: 8px; }

.filter { width: 138px; flex: none; border-left: 1px solid #c8c6c4; background: #fff; }
.phead { display: flex; align-items: center; height: 27px; }
.phead h2 { font-size: 10px; line-height: 14px; font-weight: 600; color: #252423; margin-right: auto; }
.fun { width: 11px; height: 11px; margin: 0 6px 0 8px; }
.eye { width: 10px; height: 8px; margin-right: 12px; }
.dbl { width: 9px; height: 9px; margin-right: 7px; }
.fsearch { display: flex; align-items: center; gap: 7px; height: 25px; margin: 3px 8px 2px 5px; padding-left: 8px; border: 1px solid #cfcdcb; border-radius: 2px; }
.fsearch svg { width: 10px; height: 10px; }
.fsearch input { flex: 1; font-size: 9px; }
.fsec { padding: 10px 5px 9px; }
.fsearch + .fsec { border-top: 1px solid #c8c6c4; }
.frow { display: flex; justify-content: space-between; padding-right: 2px; }
.frow b { font-weight: 400; }
.drop { height: 32px; margin-top: 5px; display: flex; align-items: center; justify-content: center; border: 1px solid #d2d0ce; border-radius: 2px; white-space: nowrap; }

.sheets { display: flex; height: 25px; flex: none; background: #fff; }
.sheets a { flex: 1 1 auto; display: flex; align-items: center; padding: 2px 12px 0; border-right: 1px solid #dedcda; border-bottom: 3px solid transparent; white-space: nowrap; justify-content: center; }
.sheets a.on { font-weight: 600; color: #222; border-bottom-color: #117865; }
.sheets button { width: 27px; flex: none; background: #117865; display: flex; align-items: center; justify-content: center; }
.sheets button svg { width: 9px; height: 9px; }
.views { width: 87px; flex: none; margin-right: 4px; background: #f2f0ee; display: flex; align-items: center; padding: 0 4px 2px 7px; }
.mon { width: 16px; height: 20px; border-bottom: 2px solid #3f9f8a; }
.pho { width: 9px; height: 14px; margin: 0 17px 0 17px; }
.ar { width: 4px; height: 6px; margin-right: 11px; }
.views .ar:last-child { margin-right: 0; }

.vis, .data { background: #f2f0ee; flex: none; border-left: 1px solid #e1dfdd; }
.vis { width: 124px; }
.vis .phead { padding-left: 6px; }
.vis h3 { font-weight: 600; margin: -1px 0 0 6px; white-space: nowrap; }
.vis .phead .dbl { margin-right: 5px; }
.vtabs { display: flex; gap: 24px; padding: 2px 6px 0; }
.vtabs button { width: 22px; height: 22px; display: flex; align-items: center; justify-content: center; }
.vtabs button.on { background: #d0cecc; }
.vtabs svg { width: 17px; height: 17px; }
.vline { height: 9px; border-bottom: 2px solid #cfcdca; margin-bottom: 3px; }
.vline svg { width: 12px; height: 7px; margin: 2px 0 0 11px; padding-top: 1px; }
.vgrid { display: grid; grid-template-columns: repeat(6, 1fr); grid-auto-rows: 1fr; height: 155px; margin: 0 3px 0 4px; border-bottom: 1px dotted #c8c6c4; justify-items: center; align-items: center; }
.vgrid svg { width: 14px; height: 14px; }
.vgrid .txt { font-size: 11px; font-weight: 700; color: #2b88d8; }
.wells { margin-top: 7px; border-top: 1px solid #d8d6d4; padding: 5px 4px 0 3px; }
.wells h4 { padding-left: 5px; }
.wells h4.strong { font-weight: 600; margin-top: 8px; }
.well { height: 20px; margin-top: 3px; display: flex; align-items: center; justify-content: center; background: #fff; border: 1px dashed #d8d6d4; white-space: nowrap; }
.well.short { height: 18px; margin-top: 6px; }
.opt { display: flex; justify-content: space-between; align-items: flex-start; padding: 6px 8px 0 5px; }
.opt.two { padding-top: 7px; }
.opt label { white-space: nowrap; }
.toggle { appearance: none; width: 22px; height: 11px; flex: none; border: 1px solid #777; border-radius: 6px; background: radial-gradient(circle at 5px 50%, #555 2px, #fff 3px); }
.toggle:checked { border-color: #117865; background: url("data:image/svg+xml,%3Csvg xmlns='http://www.w3.org/2000/svg' viewBox='0 0 20 9'%3E%3Cpath d='M4 4.500l2 2 3-4' fill='none' stroke='white' stroke-width='1.400'/%3E%3Ccircle cx='15' cy='4.500' r='3' fill='white'/%3E%3C/svg%3E") #117865; }

.data { width: 123px; }
.data .phead { padding-left: 6px; }
.data .phead .dbl { margin-right: 4px; }
.dsearch { display: flex; align-items: center; gap: 5px; height: 18px; margin: 4px 1px 4px 3px; padding-left: 7px; background: #fff; border: 1px solid #dedcda; border-bottom-color: #777; border-radius: 3px; }
.dsearch svg { width: 11px; height: 11px; }
.dsearch input { flex: 1; font-size: 9px; }
.dsearch input::placeholder, .search input::placeholder { color: #666; opacity: 1; }
.tree { list-style: none; display: grid; grid-auto-rows: 1fr; height: 280px; padding-left: 11px; }
.tree li { display: flex; align-items: center; white-space: nowrap; }
.tree .chev { width: 5px; height: 8px; margin-right: 4px; }
.tree .tbl { width: 9px; height: 9px; margin-right: 3px; }

.status { display: flex; align-items: center; gap: 3px; height: 17px; flex: none; padding: 0 10px 0 3px; background: #f2f0ee; border-top: 1px solid #e1dfdd; border-bottom: 2px solid #6b6a6c; color: #555; }
.pg { margin-right: auto; font-size: 7px; }
.zoom { appearance: none; width: 68px; height: 9px; background: linear-gradient(#777, #777) center/100% 1px no-repeat; }
.zoom::-webkit-slider-thumb { appearance: none; width: 3px; height: 9px; background: #555; }
.pct { margin: 0 7px 0 6px; }
.fit { width: 12px; height: 9px; }

.taskbar { display: flex; align-items: center; height: 30px; flex: none; padding: 0 11px 0 155px; background: linear-gradient(90deg, #d9d7e7, #dcd3e8 12%, #e4d0ec 22%, #f6e6f8 27%, #eff0f3 31%, #f1f1f3 74%, #f8e4e3 78%, #ead2d3 88%, #eacfd0); }
.start svg { width: 16px; height: 16px; }
.search { display: flex; align-items: center; gap: 6px; width: 150px; height: 20px; margin: 0 1px 0 10px; padding-left: 8px; border-radius: 10px; background: #f6eff9; font-size: 9px; }
.search svg { width: 10px; height: 10px; }
.search input { flex: 1; }
.apps { flex: 1; display: flex; }
.apps button { flex: 1; height: 30px; display: flex; align-items: center; justify-content: center; position: relative; }
.apps svg { width: 16px; height: 16px; }
.apps .hi { background: #ffffffa8; border-radius: 3px; }
.apps .alert { background: #f2a6a2; border-radius: 3px; }
.apps button::after { content: ""; position: absolute; bottom: 0; height: 2px; border-radius: 1px; width: 0; }
.apps .dot::after { width: 4px; background: #888; }
.apps .hi::after { width: 10px; background: #1683d8; }
.apps .alert::after { width: 20px; background: #c8342c; }
.tray { display: flex; align-items: center; gap: 4px; padding-left: 75px; flex: none; width: 215px; }
.tray svg { width: 12px; height: 12px; }
.tray svg:nth-child(2) { margin-left: 6px; }
.tray .gap { margin-left: 7px; }
.clock { margin-left: auto; text-align: right; line-height: 12px; color: #222; }
```
FILE: script.js
```js
const el = id => document.getElementById(id);

/* Slicers */
const slicers = [
  ["Angestellte", "w1", ["Alle auswählen", "101: Moggio, Markus", "102: Hugetobler, Armin", "105: Kellerberger, Lenard", "106: Müller, Yan", "110: Zurmühle, Marcel"]],
  ["AngestelltenID", "w2", ["Alle auswählen", "5", "6", "8", "11", "14"]],
  ["Kostentyp", "w3", ["Alle auswählen", "Absenzen", "Arbeitsstunden", "Auszahlungen", "Kompensationen", "Spesen"]],
  ["Kostenart", "w4", ["Alle auswählen", "101 : ICT Regie", "11 : Admin", "111 : Media Regie", "121 : Elektro Regie", "121 : Praktikant"]],
];
el("slicers").innerHTML = slicers.map(([title, cls, items]) => `
  <div class="slicer ${cls}"><h4>${title}${cls === "w4" ? "" : '<svg viewBox="0 0 7 4"><path d="M.5.500l3 3 3-3" fill="none" stroke="#999"/></svg>'}</h4>
  <div class="body"><ul>${items.map((t, i) => {
    const state = cls === "w2" && i === 0 ? 'class="part"' : cls === "w2" && i === 1 ? "" : "checked";
    return `<li><label><input type="checkbox" ${state}>${t}</label></li>`;
  }).join("")}</ul><div class="th ${cls === "w3" ? "full" : ""}"></div></div></div>`).join("");

/* Detail table */
const P = { 6: "101: Moggio, Markus", 11: "105: Kellerberger, Lenard", 14: "401: Regatori, Colin", 8: "130: Bürgi, Diana", 15: "102: Hugetobler, Armin" };
const F = "71 : Ferien", A = "11 : Admin", M = "41 : Monteur";
const rows = [
  [6, 2, F, "8.20", "0.00"], [11, 2, F, "8.20", "34.82"], [14, 2, F, "8.20", "3.71"], [8, 2, A, "4.25", "67.55"], [15, 2, M, "8.20", "80.97"],
  [6, 3, F, "5.20", "0.00"], [14, 3, F, "8.20", "3.71"], [8, 3, A, "3.00", "67.55"], [8, 3, A, "5.25", "67.55"], [6, 3, M, "3.00", "80.97"],
  [15, 3, M, "8.20", "80.97"], [11, 3, M, "5.00", "80.97"], [11, 3, "K-ÜS : Kompensationen Überstunden", "3.20", "0.00"],
  [8, 4, A, "0.25", "67.55"], [8, 4, A, "1.00", "67.55"], [8, 4, A, "2.75", "67.55"], [6, 4, M, "5.00", "80.97"],
  [14, 6, "80 : Schule/Aus-&amp;Weiterbildung", "8.20", "3.71"], [8, 6, A, "8.50", "67.55"], [6, 6, M, "8.25", "80.97"],
  [15, 6, M, "2.00", "80.97"], [15, 6, M, "3.00", "80.97"], [15, 6, M, "3.20", "80.97"], [11, 6, M, "2.00", "80.97"],
];
const kind = art => art === F || art.startsWith("80") ? "Absenzen" : art.startsWith("K") ? "Kompensationen" : "Arbeitsstunden";
el("rows").innerHTML = rows.map(([id, day, art, qty, rate]) =>
  `<tr><td class="n">${id}</td><td>${P[id]}</td><td>0${day}.01.2014</td><td>${kind(art)}</td><td>${art}</td><td class="n">${qty}</td><td class="n">${rate}</td><td></td></tr>`).join("");

/* Bar chart, logarithmic scale */
const bars = [["401: Regator...", 31038.1], ["102: Hugeto...", 25639.1], ["130: Bürgi, D...", 25070.9], ["101: Moggio...", 23982.9], ["105: Kellerbe...", 23745.9], ["106: Müller, ...", 20298.2], ["213: Locher, ...", 16953.8], ["114: Kinsche,...", 16302.1], ["116: Burger...", 14354.5], ["214: Issiger, ...", 13172.2], ["110: Zurmüh...", 12720.7], ["504: Dietmei...", 11417.1], ["233: Brünige...", 9851.1], ["215: Schmid,...", 9812.7], ["140: Bürgin, ...", 8453.1], ["122: Maliker,...", 8169.3], ["234: Willisau...", 8031.4], ["232: Schmid,...", 7916.1]];
el("plot").innerHTML = bars.map(([n, v]) => {
  const w = (Math.log10(v) / 5.18 * 100).toFixed(1), inside = v > 10000;
  return `<div class="bar"><span class="name">${n}</span><div class="area"><div class="fill" style="width:${w}%">${inside ? v.toFixed(1) : ""}</div>${inside ? "" : `<span class="out">${v.toFixed(1)}</span>`}</div></div>`;
}).join("");

/* Field list */
const tables = "Ab An An Au Au Bu Bu Fe Jo Ko Ko So So So So".split(" ").map(s => `1234_PROJEKT_PBI_${s}...`).concat("Kalender", "Zeilentyp");
const tIcon = '<rect x=".7" y=".7" width="8.600" height="8.600" rx="2" fill="none" stroke="#444" stroke-width="1.200"/><path d="M.7 3.500h8.600M.7 6.500h8.600M3.500.700v8.600M6.500.700v8.600" stroke="#444"/>';
el("tree").innerHTML = tables.map((t, i) => `<li><svg class="chev" viewBox="0 0 5 8"><path d="M.7.700L4.300 4 .7 7.300" fill="none" stroke="#555"/></svg><svg class="tbl" viewBox="0 0 10 10">${tIcon}${i > 14 ? '<path d="M5 5h6v6H5z" fill="#333" stroke="#f2f0ee"/>' : ""}</svg>${t}</li>`).join("");

/* Visual gallery */
const k = d => `<path d="${d}" fill="none" stroke="#555" stroke-width="1.200"/>`;
const w = d => `<path d="${d}" fill="#fff" stroke="#555"/>`;
const b = d => `<path d="${d}" fill="#7cb9ee" stroke="#2b7cd3"/>`;
const bl = d => `<path d="${d}" fill="none" stroke="#2b7cd3" stroke-width="1.200"/>`;
const ax = k("M1.500 0v14.500H16");
const bolt = '<path d="M3 0h5L6 3h2L1 9l2-5H1z" fill="#f5b060" stroke="#d9730d"/>';
const fun = w("M8 8h8l-3 3.500V16h-2v-4.500z");
const vis = [
  ax + b("M2 2h6v2.500H2z") + w("M8 2h2v2.500H8zM2 8h12v3H2z"),
  ax + b("M4 7h3v3H4zM10 3h3v5h-3z") + w("M4 10h3v4.500H4zM10 8h3v6.500h-3z"),
  ax + b("M2 2h12v3H2z") + w("M2 5h9v2.500H2z") + b("M2 9h7v3H2z"),
  ax + b("M3.500 2h3v12.500h-3z") + w("M6.500 6h2.500v8.500H6.500z") + b("M11 8h2v6.500h-2z") + w("M13 4h2v10.500h-2z"),
  ax + b("M2 2h5v3H2z") + w("M7 2h7v3H7zM2 8h12v3.500H2z"),
  ax + b("M4 1h3v7H4zM10 1h3v4h-3z") + w("M4 8h3v6.500H4zM10 5h3v9.500h-3z"),
  ax + bl("M2 10l4-5 4 4 5-6") + k("M2 12l4-4 5 0 4-4"),
  w("M6 14L11 1l4.500 13z") + b("M.5 14.500L6 5l6 9.500z"),
  ax + b("M2 5l4 4 4-6 5 3v5l-5 0-4 2-4-4z") + k("M2 2l4 4 4-3 5 3"),
  ax + b("M2 2h13v6l-4 2-4-4-5 5z"),
  ax + b("M4 4h3v10.500H4z") + w("M10 2h3v12.500h-3z") + k("M2 10l4-3 4 3 5-5"),
  ax + w("M4 8h3v6.500H4zM9 2h3v12.500H9z") + b("M12 8h2.500v6.500H12z") + k("M2 6l4 3 4-2 5 4"),
  ax + '<path d="M2 3q3 0 4 4t4-1 5-3v9H2z" fill="#e8a05a" stroke="#777"/>' + b("M2 8q4-2 6 1t7-2v4H2z"),
  ax + w("M3 7h3v7.500H3zM8 3h2v8H8z") + b("M10 1h3v6h-3z") + w("M12 2h3v12.500h-3z"),
  b("M1 1.500h14v3H1zM3 4.500h10v4H3zM5 8.500h6v3H5zM6 11.500h4V15H6z"),
  ax + '<path d="M4 3h2v2H4zM12 9h2v2h-2zM6 10h2v2H6z" fill="#444"/><path d="M8 6h2v2H8zM12 3h2v2h-2zM4 8h1.500v1.500H4z" fill="#2b7cd3"/>',
  '<circle cx="8" cy="8" r="7" fill="#fff" stroke="#555" stroke-width="1.200"/>' + b("M8 1a7 7 0 0 1 5 12L8 8z"),
  '<circle cx="8" cy="8" r="5" fill="none" stroke="#2b7cd3" stroke-width="5"/><circle cx="8" cy="8" r="5" fill="none" stroke="#7cb9ee" stroke-width="3" stroke-dasharray="24 8"/>',
  w("M1 1.500h14v13H1z") + b("M1 1.500h6v13H1zM7 1.500h8v5H7z") + k("M1 8h6M11 6.500v8M7 10h8"),
  '<circle cx="7.500" cy="6.500" r="5" fill="#fff" stroke="#555"/><path d="M5 4l3-1 3 2-2 3-3 1z" fill="#2f9e50"/>' + k("M2 3q-1 9 7 9.500 5 0 5.500-5M8 13v2M4.500 15.500h7"),
  b("M1 3l4-1 5 2 5-2-1 7-4 3-3 3-4-3z") + k("M1 6h5l4-2M6 6l1 5M10 9h5"),
  '<path d="M9 0l5.500 15L9 11 2 15z" fill="#2b9bd8"/><path d="M9 0v11L2 15z" fill="#1b6fae"/>',
  b("M1 12a7 7 0 0 1 14 0h-3.500a3.500 3.500 0 0 0-7 0z") + k("M6 11l4-2"),
  w("M2 4.500h13.500v10H2z") + bolt + '<text x="6" y="12" font-size="7" fill="#2b7cd3">123</text>',
  w("M.5 3h15v10H.5z") + '<path d="M2 10l2.500-5L7 10z" fill="#2f9e50"/><path d="M9 6h5l-2.500 4.500z" fill="#d22"/>',
  w("M1 2h14v4H1zM1 6h9v8H1z") + k("M3 9h5M3 11.500h4") + fun,
  w("M1 1.500h14v13H1z") + k("M1 5h14M1 8h14M1 11.500h14M5.500 1.500v13M10 1.500v13"),
  w("M1 1.500h14v13H1z") + b("M1 1.500h14v3H1zM10 8h5v6.500h-5z") + k("M1 8h14M1 11.500h14M5.500 4v10.500M10 4v10.500"),
  "R", "Py",
  k("M1.500 1v14M2 4h8M2 8h5M2 11h8M2 14h13") + '<circle cx="12" cy="4" r="2.500" fill="#2b7cd3"/>',
  b("M0 5h6v6H0zM11 1h5v4h-5zM11 6h5v4h-5zM11 11h5v4h-5z") + bl("M6 8h5M8.500 3v10M8.500 3H11M8.500 13H11"),
  '<path d="M1 2h14v9H8l-4 4v-4H1z" fill="#f2f0ee" stroke="#2b7cd3" stroke-width="1.200"/>',
  w("M3 1h7l4 4v10H3z") + k("M10 1v4h4M6 9h5M6 12h5") + '<circle cx="3" cy="6" r="2" fill="#2b7cd3"/>',
  '<path d="M4 1h8v6q-1 3-4 3T4 7zM4 3H1q0 4 3 5M12 3h3q0 4-3 5M8 10v4M5 14.500h6" fill="none" stroke="#444" stroke-width="1.400"/>' + b("M5 2h6v3H5z"),
  w("M2.500 1h8l3 3v11h-11z") + '<path d="M5 9h1.500v5H5zM7.500 11H9v3H7.500zM10 7h1.500v7H10z" fill="#333"/>',
  w("M5 3h5v4H5zM2 10h5v4H2z") + b("M10 3h5v4h-5z") + bolt + fun,
  w("M2 3h13v11H2z") + bolt + bl("M7 10l2-5 2 5") + fun,
  w("M3 3h12v3H3zM3 8h8v5H3z") + bolt + fun,
  w("M1 2.500h14v11H1z") + b("M1 13.500V10l4-3 4 4 3-2 3 2v2.500z") + '<circle cx="11" cy="5.500" r="1.500" fill="#e8820c"/>',
  b("M2 7h12v8H2z") + '<path d="M1 1h5v5L3.500 9 1 6zM12 1h3v4h-3z" fill="#d9600d"/><circle cx="14" cy="13" r="2" fill="#d9600d"/>' + '<path d="M5 14q0-5 4-6t3-7" fill="none" stroke="#fff" stroke-width="1.500"/>',
  '<path d="M8 1l3 2 3 2 1 3-1 3-3 2-3 2-3-2-3-2-1-3 1-3 3-2zM5 5l6 6M11 5l-6 6" fill="#f7e6f7" stroke="#a23fae" stroke-width="1.300"/>',
  '<path d="M1 2h8l6 6-6 6H1l5-6z" fill="#dcecfb" stroke="#2b7cd3" stroke-width="1.300"/>' + bl("M4 14l6-6-6-6M7 14l3-3"),
  '<path d="M1 6h2M7 6h2M13 6h2" stroke="#444" stroke-width="2"/>',
];
el("vgrid").innerHTML = vis.map(v => v.length < 3 ? `<span class="txt">${v}</span>` : `<svg viewBox="0 0 16 16">${v}</svg>`).join("");

/* Taskbar */
const f = (d, c) => `<path d="${d}" fill="${c}"/>`;
const t = (s, x, y, z, c = "#fff") => `<text x="${x}" y="${y}" font-size="${z}" font-weight="700" fill="${c}">${s}</text>`;
const badge = (s, c) => f("M0 7h8v8H0z", c) + t(s, 2, 13.5, 6);
const lock = '<circle cx="8" cy="8" r="7.500" fill="#b9c4ea" stroke="#2a2a3a"/><path d="M4.500 7.500h7v5h-7z" fill="#1d2230"/><path d="M6 7.500V5q2-3 4 0v2.500" fill="none" stroke="#1d2230" stroke-width="1.500"/>';
const outl = f("M4 1h11v6H4z", "#36a5e8") + f("M4 6h12v9H5z", "#1266c0") + f("M9 8l7-3v6z", "#7fd0f8");
const apps = [
  f("M1 5h10v10H1z", "#222") + f("M5 1h10v10H5z", "#dcdcdc"),
  f("M4 0h11v16H4z", "#c85fe0") + f("M10 4h6v8h-6z", "#9a33c8") + badge("N", "#7a1fa2"),
  f("M1 3h14v10q0 3-3 3H4q-3 0-3-3z", "#1464b4") + f("M5 0h6v3H5z", "#5ea8e8") + f("M5 6h2.500v2.500H5z", "#f25022") + f("M8.500 6H11v2.500H8.500z", "#7fba00") + f("M5 9.500h2.500V12H5z", "#00a4ef") + f("M8.500 9.500H11V12H8.500z", "#ffb900"),
  lock,
  f("M4 1h11v7H4z", "#3fa0ee") + f("M4 8h11v7H4z", "#1a5fc8") + badge("W", "#1746a0"),
  lock,
  '<path d="M1 3h11v12H1z" fill="#eef2e4" stroke="#9aa890"/>' + f("M2 8q3-4 6 0l3 2-3 4H3z", "#4aa83c") + f("M14 1l2 1-6 9-1-1z", "#e8a020"),
  f("M2 2h12v13H2z", "#4fd08c") + f("M2 0h12v2H2z", "#2a7a50") + t("XML", 3, 10, 5, "#1a5a3a"),
  '<path d="M2 1h10v6H2z" fill="#f4f6f8" stroke="#a8b4bc"/>' + f("M2 1h10v2H2z", "#5c9cc8") + f("M3 8l6-3 6 4-3 5-8-1z", "#8a949c") + f("M6 9l4-1 2 1-1 3-4 0z", "#c8d0d4"),
  outl + f("M0 5h8v9H0z", "#0f58b0") + t("O", 1.5, 12, 7),
  f("M0 0h16v16H0z", "#18a0d8") + '<path d="M3 6h10v8H3zM4 6q2-6 8 0" fill="none" stroke="#c8f0ff"/>' + t("GO", 3.5, 12.5, 6),
  f("M4 5h9v10H4z", "#6468d8") + '<circle cx="6" cy="3" r="2.500" fill="#7a80ea"/>' + f("M0 7h8v8H0z", "#4348b8") + t("T", 2, 13, 6) + f("M12-4l5 10H7z", "#e0401c") + f("M11.500 0h1.200v3h-1.200z", "#fff"),
  f("M0 0h16v16H0z", "#b81414") + t("Fz", 2, 13, 12),
  f("M4 1q11-2 11 2v10q0 3-11 2z", "#d0485a") + badge("A", "#9a1c30"),
  '<circle cx="9" cy="8" r="7" fill="#f07a4c"/>' + f("M9 1a7 7 0 0 1 7 7H9z", "#fbb08c") + badge("P", "#c0341c"),
  f("M5 1h10v14H5z", "#2ea85c") + f("M10 1h5v7h-5z", "#8ad870") + badge("X", "#126a38"),
  f("M0 1h13v14H0z", "#0f5fb0") + f("M7 8h9v8z", "#50b8f0") + t("O", 1.5, 10, 9) + '<circle cx="14" cy="2.500" r="3.500" fill="#f6c050"/>',
  f("M1 1h14v14H1z", "#3a3a3a") + f("M8 9h7l-4 6H8z", "#f2c020"),
  '<path d="M5 1h10v10H5z" fill="#e6ece6" stroke="#889088"/>' + f("M0 7h7v8H0z", "#707a80") + '<path d="M6 9l3-3 2 1 3-4" fill="none" stroke="#3a9a50" stroke-width="1.300"/>',
  f("M3 0h10q3 3 0 5 3 3 0 5 3 4 0 6H3q-3-3 0-6-3-2 0-5-3-2 0-5z", "#1c6fd8") + f("M4 1h8v2H4zM4 6h8v2H4z", "#6cc0fa"),
  f("M9 0h7v16H9z", "#f4b81c") + f("M4 4h7v12H4z", "#e09a10") + f("M0 8h6l2 8H0z", "#1f6fc0"),
  f("M0 2h6l2 2h8v11H0z", "#f8c83c") + f("M3 10h10v5H3z", "#2878c8"),
  '<path d="M5 1h7c-2 0-3 2-4 6l-1 4c-1 3-7 2-7-2s1-8 5-8z" fill="url(#ca)"/><path d="M11 3c5-1 5 3 4 6s-2 5-5 5H6c3 0 3-3 5-11z" fill="url(#cb)"/>' + f("M5 11h11v5H5z", "#222"),
  '<circle cx="8" cy="8" r="7.500" fill="#1c78c8"/>' + f("M2 4q5-6 11 0 4 6-2 6l-3-3q-4 0-3 6Q-1 11 2 4z", "#48c8a0") + f("M0 11h9v5H0z", "#c07820"),
  '<circle cx="8" cy="8" r="7" fill="#fff" stroke="#1670c0" stroke-width="1.600"/><path d="M11.500 5.500a4 4 0 1 0 0 5" fill="none" stroke="#1670c0" stroke-width="2.400"/>',
  f("M2 0h12v16H2z", "#5a646c") + f("M4 2h8v3H4z", "#50c8f4") + '<path d="M4 8h8M4 11h8M4 14h8" stroke="#d8e4ea" stroke-width="2" stroke-dasharray="2 1"/>',
  f("M0 7l5-2v8l-5-2z", "#e83c28") + f("M5 5l4-2v12l-4-2z", "#f49a20") + f("M10 1h5v14l-5-2z", "#4aa03c"),
  f("M0 0h16v16H0z", "#1768b0") + t("S", 4, 13, 14),
];
const mark = { 9: "hi", 11: "alert", 16: "dot", 20: "dot", 21: "dot", 26: "dot", 27: "dot" };
el("apps").innerHTML = apps.map((a, i) => `<button class="${mark[i] || ""}" aria-label="App ${i + 1}"><svg viewBox="0 0 16 16">${a}</svg></button>`).join("");
```
